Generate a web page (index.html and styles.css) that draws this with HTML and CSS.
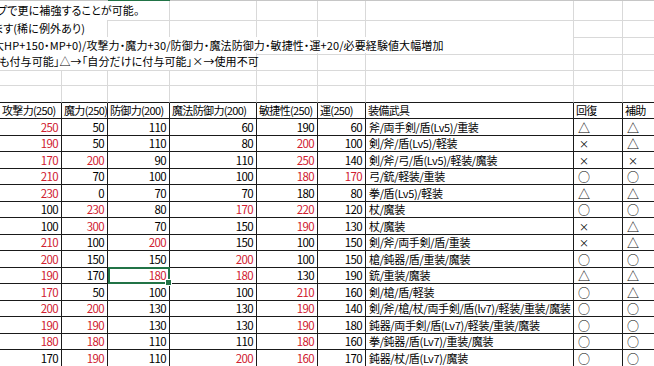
FILE: index.html
```html
<!DOCTYPE html>
<html lang="ja">
<head>
<meta charset="utf-8">
<title>ステータス表</title>
<link rel="stylesheet" href="styles.css">
</head>
<body>
<div class="sheet">
  <div class="row colhead">
    <div class="hc"></div><div class="hc"></div><div class="hc on"></div><div class="hc"></div><div class="hc"></div><div class="hc"></div><div class="hc"></div><div class="hc"></div><div class="hc"></div>
  </div>

  <div class="row first">
    <div class="g note span3 i1">プで更に補強することが可能。</div>
    <div class="g"></div><div class="g"></div><div class="g"></div><div class="g"></div><div class="g"></div><div class="g"></div>
  </div>
  <div class="row">
    <div class="g note span2 i2">ます(稀に例外あり)</div>
    <div class="g"></div><div class="g"></div><div class="g"></div><div class="g"></div><div class="g"></div><div class="g"></div><div class="g"></div>
  </div>
  <div class="row">
    <div class="g note span7 i3">大HP+150・MP+0)/攻撃力・魔力+30/防御力・魔法防御力・敏捷性・運+20/必要経験値大幅増加</div>
    <div class="g"></div><div class="g"></div>
  </div>
  <div class="row">
    <div class="g note span4 i4">も付与可能」△→「自分だけに付与可能」×→使用不可</div>
    <div class="g"></div><div class="g"></div><div class="g"></div><div class="g"></div><div class="g"></div>
  </div>
  <div class="row">
    <div class="g"></div><div class="g"></div><div class="g"></div><div class="g"></div><div class="g"></div><div class="g"></div><div class="g"></div><div class="g"></div><div class="g"></div>
  </div>
  <div class="row edge">
    <div class="g"></div><div class="g"></div><div class="g"></div><div class="g"></div><div class="g"></div><div class="g"></div><div class="g"></div><div class="g"></div><div class="g"></div>
  </div>

  <div class="row">
    <div class="t h">攻撃力(250)</div><div class="t h">魔力(250)</div><div class="t h">防御力(200)</div><div class="t h">魔法防御力(200)</div><div class="t h">敏捷性(250)</div><div class="t h">運(250)</div><div class="t h">装備武具</div><div class="t h">回復</div><div class="t h">補助</div>
  </div>

  <div class="row">
    <div class="t n r">250</div><div class="t n">50</div><div class="t n">110</div><div class="t n">60</div><div class="t n">190</div><div class="t n">60</div><div class="t w">斧/両手剣/盾(Lv5)/重装</div><div class="t s">△</div><div class="t s">△</div>
  </div>
  <div class="row">
    <div class="t n r">190</div><div class="t n">50</div><div class="t n">110</div><div class="t n">80</div><div class="t n r">200</div><div class="t n">100</div><div class="t w">剣/斧/盾(Lv5)/軽装</div><div class="t s x">×</div><div class="t s">△</div>
  </div>
  <div class="row">
    <div class="t n r">170</div><div class="t n r">200</div><div class="t n">90</div><div class="t n">110</div><div class="t n r">250</div><div class="t n">140</div><div class="t w">剣/斧/弓/盾(Lv5)/軽装/魔装</div><div class="t s x">×</div><div class="t s x">×</div>
  </div>
  <div class="row">
    <div class="t n r">210</div><div class="t n">70</div><div class="t n">100</div><div class="t n">100</div><div class="t n r">180</div><div class="t n r">170</div><div class="t w">弓/銃/軽装/重装</div><div class="t s">○</div><div class="t s">○</div>
  </div>
  <div class="row">
    <div class="t n r">230</div><div class="t n">0</div><div class="t n">70</div><div class="t n">70</div><div class="t n">180</div><div class="t n">80</div><div class="t w">拳/盾(Lv5)/軽装</div><div class="t s">△</div><div class="t s">△</div>
  </div>
  <div class="row">
    <div class="t n">100</div><div class="t n r">230</div><div class="t n">80</div><div class="t n r">170</div><div class="t n r">220</div><div class="t n">120</div><div class="t w">杖/魔装</div><div class="t s">○</div><div class="t s">○</div>
  </div>
  <div class="row">
    <div class="t n">100</div><div class="t n r">300</div><div class="t n">70</div><div class="t n">150</div><div class="t n r">190</div><div class="t n">130</div><div class="t w">杖/魔装</div><div class="t s x">×</div><div class="t s">△</div>
  </div>
  <div class="row">
    <div class="t n r">210</div><div class="t n">100</div><div class="t n r">200</div><div class="t n">150</div><div class="t n">100</div><div class="t n">150</div><div class="t w">剣/斧/両手剣/盾/重装</div><div class="t s x">×</div><div class="t s">△</div>
  </div>
  <div class="row">
    <div class="t n r">200</div><div class="t n">150</div><div class="t n">150</div><div class="t n r">200</div><div class="t n">100</div><div class="t n">150</div><div class="t w">槍/鈍器/盾/重装/魔装</div><div class="t s">○</div><div class="t s">○</div>
  </div>
  <div class="row">
    <div class="t n r">190</div><div class="t n">170</div><div class="t n r sel">180</div><div class="t n r">180</div><div class="t n">130</div><div class="t n">190</div><div class="t w">銃/重装/魔装</div><div class="t s">△</div><div class="t s">△</div>
  </div>
  <div class="row">
    <div class="t n r">170</div><div class="t n">50</div><div class="t n">100</div><div class="t n">100</div><div class="t n r">210</div><div class="t n">160</div><div class="t w">剣/槍/盾/軽装</div><div class="t s">○</div><div class="t s">△</div>
  </div>
  <div class="row">
    <div class="t n r">200</div><div class="t n r">200</div><div class="t n">130</div><div class="t n">130</div><div class="t n r">190</div><div class="t n">140</div><div class="t w">剣/斧/槍/杖/両手剣/盾(lv7)/軽装/重装/魔装</div><div class="t s">○</div><div class="t s">○</div>
  </div>
  <div class="row">
    <div class="t n r">190</div><div class="t n r">190</div><div class="t n">130</div><div class="t n">130</div><div class="t n r">190</div><div class="t n">180</div><div class="t w">鈍器/両手剣/盾(Lv7)/軽装/重装/魔装</div><div class="t s">○</div><div class="t s">○</div>
  </div>
  <div class="row">
    <div class="t n r">180</div><div class="t n r">180</div><div class="t n">110</div><div class="t n">110</div><div class="t n r">180</div><div class="t n">160</div><div class="t w">拳/鈍器/盾(Lv7)/重装/魔装</div><div class="t s">○</div><div class="t s">○</div>
  </div>
  <div class="row">
    <div class="t n">170</div><div class="t n r">190</div><div class="t n">110</div><div class="t n r">200</div><div class="t n r">160</div><div class="t n">170</div><div class="t w">鈍器/杖/盾(Lv7)/魔装</div><div class="t s">○</div><div class="t s">○</div>
  </div>
</div>
</body>
</html>
```
FILE: styles.css
```css
html, body {
  margin: 0;
  padding: 0;
  background: #ffffff;
  overflow: hidden;
}

body {
  width: 654px;
  height: 366px;
  font-family: "Noto Sans CJK JP", "Noto Sans", sans-serif;
  font-feature-settings: "palt";
  font-size: 11px;
  color: #000000;
}

.sheet {
  width: 720px;
  display: flex;
  flex-direction: column;
}

.row {
  display: grid;
  grid-template-columns: 62px 46px 62px 87px 61px 48px 208px 49px 97px;
  height: 16.5px;
}

.row.colhead {
  height: 1px;
}

.row.first {
  height: 19px;
}

.hc {
  background: #c6c6c6;
}

.hc.on {
  background: #217346;
}

.g, .t {
  box-sizing: border-box;
  white-space: nowrap;
  line-height: 15px;
  overflow: visible;
  display: flex;
  align-items: flex-end;
}

.g {
  border-right: 1px solid #d9d9d9;
  border-bottom: 1px solid #d9d9d9;
}

.row.edge .g {
  border-bottom-color: #1a1a1a;
}

.t {
  border-right: 1px solid #1a1a1a;
  border-bottom: 1px solid #1a1a1a;
}

.note {
  padding-left: 0;
  background: #ffffff;
  display: block;
  line-height: 17px;
  letter-spacing: 0.1px;
}

.row.first .note {
  line-height: 19px;
}

.span2 { grid-column: span 2; }
.span3 { grid-column: span 3; }
.span4 { grid-column: span 4; }
.span7 { grid-column: span 7; }

.i1 { text-indent: -3px; }
.i2 { text-indent: -7px; }
.i3 { text-indent: -7px; }
.i4 { text-indent: -1px; }

.h {
  padding-left: 2px;
  letter-spacing: -0.65px;
}

.n {
  justify-content: flex-end;
  padding-right: 3px;
  font-size: 11.5px;
  letter-spacing: -0.6px;
}

.r {
  color: #d0202f;
}

.w {
  padding-left: 3px;
  letter-spacing: -0.35px;
}

.s {
  padding-left: 4px;
  font-size: 12px;
}

.s.x {
  font-size: 10px;
  padding-left: 5px;
}

.sel {
  position: relative;
}

.sel::before {
  content: "";
  position: absolute;
  left: 0;
  top: -1px;
  right: -1px;
  bottom: -1px;
  border: 2px solid #217346;
}

.sel::after {
  content: "";
  position: absolute;
  right: -3px;
  bottom: -3px;
  width: 5px;
  height: 5px;
  background: #217346;
  border: 1px solid #ffffff;
}
```
